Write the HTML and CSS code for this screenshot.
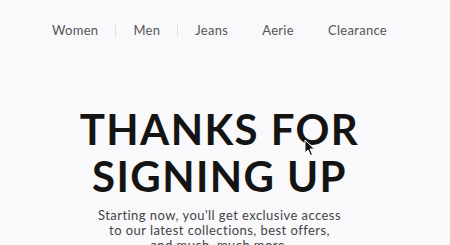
FILE: index.html
```html
<!DOCTYPE html>
<html>
<head>
<meta charset="utf-8">
<link rel="stylesheet" href="styles.css">
</head>
<body>
<nav class="nav">
  <a class="nav-item">Women</a>
  <span class="sep"></span>
  <a class="nav-item">Men</a>
  <span class="sep"></span>
  <a class="nav-item">Jeans</a>
  <a class="nav-item">Aerie</a>
  <a class="nav-item">Clearance</a>
</nav>
<main class="hero">
  <h1 class="title">THANKS FOR<br>SIGNING UP</h1>
  <p class="lead">Starting now, you'll get exclusive access<br>to our latest collections, best offers,<br>and much, much more.</p>
  <svg class="cursor" width="12" height="18" viewBox="0 0 12 18"><path d="M1 1 L1 14 L4 11 L6.5 16.5 L8.5 15.5 L6 10 L10.5 10 Z" fill="#111" stroke="#fff" stroke-width="1"/></svg>
</main>
</body>
</html>
```
FILE: styles.css
```css
html, body { margin: 0; padding: 0; }
body {
  background: #f9f9fb;
  font-family: Lato, "Open Sans", sans-serif;
  width: 439px;
  padding-right: 11px;
  height: 245px;
  overflow: hidden;
}
.nav {
  display: flex;
  justify-content: center;
  align-items: center;
  padding-top: 22px;
  height: 16px;
}
.nav-item {
  font-size: 13px;
  color: #555;
  letter-spacing: 0.3px;
  padding: 0 17px;
}
.sep {
  width: 1px;
  height: 14px;
  background: #e2e2e6;
}
.hero {
  position: relative;
  text-align: center;
  padding-top: 68px;
}
.title {
  margin: 0;
  font-size: 42px;
  font-weight: 700;
  line-height: 47px;
  letter-spacing: 1.4px;
  color: #141414;
}
.lead {
  margin: 8px 0 0;
  font-size: 13px;
  line-height: 15px;
  color: #444;
  letter-spacing: 0.45px;
}
.cursor {
  position: absolute;
  left: 304px;
  top: 101px;
}
```
